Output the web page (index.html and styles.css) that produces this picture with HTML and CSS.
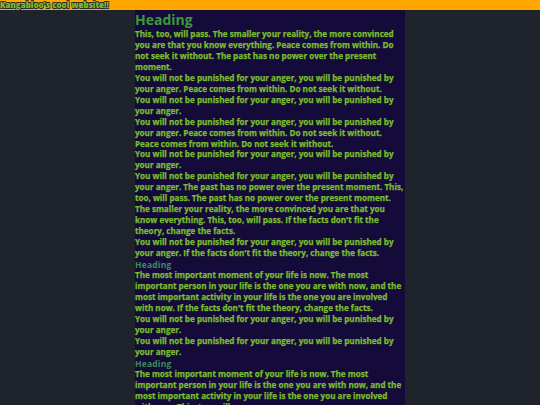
FILE: index.html
```html
<!DOCTYPE html>
<html>
<head>
<meta charset="utf-8">
<link rel="stylesheet" href="styles.css">
</head>
<body>
<header class="topbar">Kangabloo's cool website!!</header>
<main class="column">
<h1 class="title">Heading</h1>
<p>This, too, will pass. The smaller your reality, the more convinced you are that you know everything. Peace comes from within. Do not seek it without. The past has no power over the present moment.</p>
<p>You will not be punished for your anger, you will be punished by your anger. Peace comes from within. Do not seek it without.</p>
<p>You will not be punished for your anger, you will be punished by your anger.</p>
<p>You will not be punished for your anger, you will be punished by your anger. Peace comes from within. Do not seek it without. Peace comes from within. Do not seek it without.</p>
<p>You will not be punished for your anger, you will be punished by your anger.</p>
<p>You will not be punished for your anger, you will be punished by your anger. The past has no power over the present moment. This, too, will pass. The past has no power over the present moment. The smaller your reality, the more convinced you are that you know everything. This, too, will pass. If the facts don't fit the theory, change the facts.</p>
<p>You will not be punished for your anger, you will be punished by your anger. If the facts don't fit the theory, change the facts.</p>
<h3 class="sub">Heading</h3>
<p>The most important moment of your life is now. The most important person in your life is the one you are with now, and the most important activity in your life is the one you are involved with now. If the facts don't fit the theory, change the facts.</p>
<p>You will not be punished for your anger, you will be punished by your anger.</p>
<p>You will not be punished for your anger, you will be punished by your anger.</p>
<h3 class="sub">Heading</h3>
<p>The most important moment of your life is now. The most important person in your life is the one you are with now, and the most important activity in your life is the one you are involved with now. This, too, will pass.</p>
</main>
</body>
</html>
```
FILE: styles.css
```css
html, body {
  margin: 0;
  padding: 0;
}
body {
  background: #1f232b;
  font-family: "Open Sans", "Liberation Sans", sans-serif;
}
.topbar {
  display: block;
  background: #ffa700;
  height: 10px;
  line-height: 10px;
  font-size: 8px;
  font-weight: 800;
  color: #7cbf2f;
  text-shadow: -0.6px -0.6px 0 #2a2a2a, 0.6px -0.6px 0 #2a2a2a, -0.6px 0.6px 0 #2a2a2a, 0.6px 0.6px 0 #2a2a2a;
  white-space: nowrap;
}
.column {
  display: block;
  width: 270px;
  margin: 0 auto;
  background: #150b3a;
  padding-top: 1px;
  min-height: 400px;
}
.title {
  margin: 0;
  font-size: 14px;
  line-height: 18px;
  font-weight: 700;
  color: #3a9a3a;
  letter-spacing: 0;
}
.sub {
  margin: 0;
  font-size: 8.5px;
  line-height: 11px;
  font-weight: 700;
  color: #3d8a5c;
  letter-spacing: 0.2px;
}
.column p {
  margin: 0;
  font-size: 8.1px;
  line-height: 10.95px;
  font-weight: 700;
  color: #7abd2e;
  -webkit-text-stroke: 0.25px #7abd2e;
}
```
